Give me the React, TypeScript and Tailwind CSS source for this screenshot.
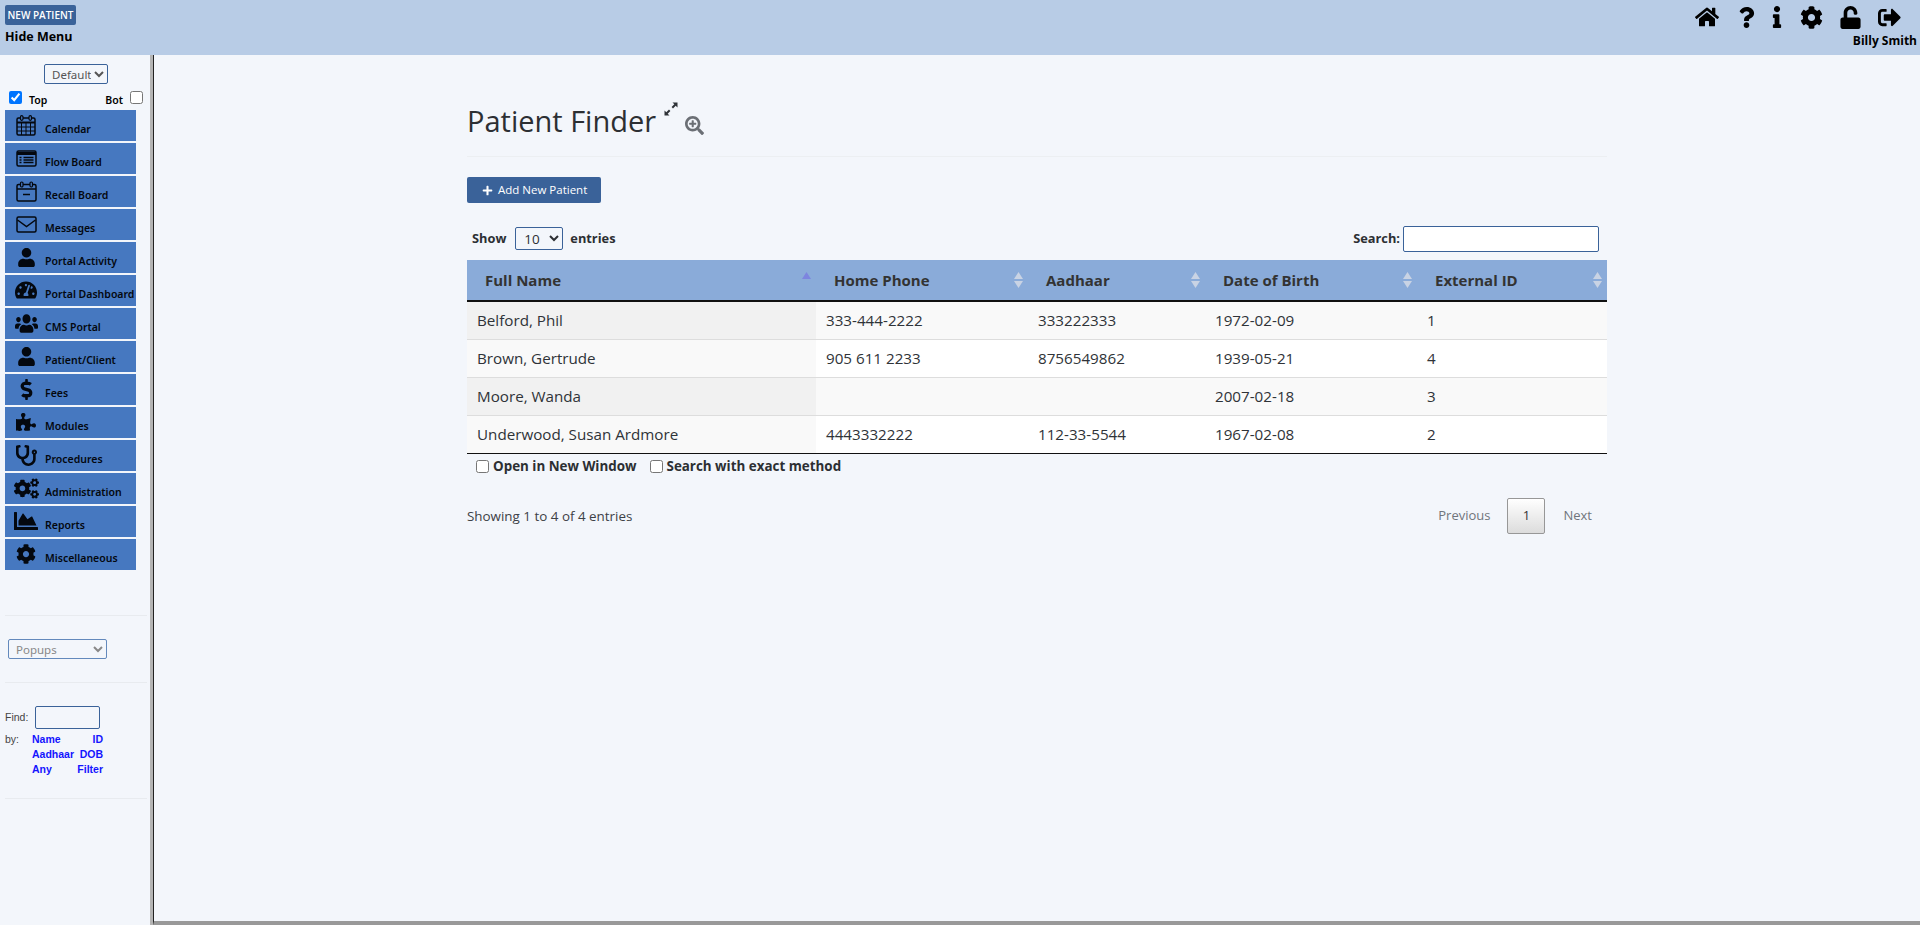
import {
  FaChartArea,
  FaCog,
  FaCogs,
  FaDollarSign,
  FaHome,
  FaInfo,
  FaPlus,
  FaPuzzlePiece,
  FaQuestion,
  FaSearchPlus,
  FaSignOutAlt,
  FaStethoscope,
  FaTachometerAlt,
  FaUnlock,
  FaUser,
  FaUsers,
} from "react-icons/fa";
import type { ReactNode } from "react";

function CalendarIcon() {
  return (
    <svg width="20" height="21" viewBox="0 0 20 21" fill="none" stroke="currentColor">
      <rect x="1" y="3" width="18" height="17" rx="1.5" strokeWidth="1.5" />
      <path d="M1 7.5h18" strokeWidth="2" />
      <path d="M5.5 8v12M10 8v12M14.5 8v12M1 12h18M1 16h18" strokeWidth="1" />
      <rect x="4.5" y="0.7" width="2.5" height="4.6" rx="1.2" fill="#4678c0" strokeWidth="1.2" />
      <rect x="13" y="0.7" width="2.5" height="4.6" rx="1.2" fill="#4678c0" strokeWidth="1.2" />
    </svg>
  );
}

function FlowIcon() {
  return (
    <svg width="21" height="17" viewBox="0 0 21 17" fill="none" stroke="currentColor">
      <rect x="1" y="1" width="19" height="15" rx="1.5" strokeWidth="1.5" />
      <path d="M1 3.5h19" strokeWidth="3" />
      <path d="M3.5 7.5h2M7.5 7.5h10M3.5 10h2M7.5 10h10M3.5 12.5h2M7.5 12.5h10" strokeWidth="1.3" />
    </svg>
  );
}

function RecallIcon() {
  return (
    <svg width="21" height="21" viewBox="0 0 21 21" fill="none" stroke="currentColor">
      <rect x="1" y="3.5" width="19" height="16.5" rx="1.5" strokeWidth="1.5" />
      <path d="M1 8h19" strokeWidth="1.5" />
      <path d="M7 13.5h7" strokeWidth="1.5" />
      <rect x="4.5" y="1" width="2.5" height="5" rx="1.2" fill="#4678c0" strokeWidth="1.2" />
      <rect x="14" y="1" width="2.5" height="5" rx="1.2" fill="#4678c0" strokeWidth="1.2" />
    </svg>
  );
}

function MailIcon() {
  return (
    <svg width="21" height="17" viewBox="0 0 21 17" fill="none" stroke="currentColor" strokeWidth="1.5">
      <rect x="1" y="1" width="19" height="15" rx="1.5" />
      <path d="M1.5 4l9 6.5 9-6.5" />
    </svg>
  );
}

function ExpandIcon() {
  return (
    <svg width="14" height="14" viewBox="0 0 14 14" fill="currentColor" className="mt-[2px] ml-[8px] shrink-0">
      <path d="M8.5 0.5H13.5V5.5L11.7 3.7 9 6.4 7.6 5 10.3 2.3Z" />
      <path d="M0.5 8.5V13.5H5.5L3.7 11.7 6.4 9 5 7.6 2.3 10.3Z" />
    </svg>
  );
}

function SortArrows({ active }: { active?: boolean }) {
  if (active) {
    return (
      <svg width="9" height="7" viewBox="0 0 9 7" className="mb-[10px] shrink-0 fill-[#7d85df]">
        <path d="M4.5 0L9 7H0Z" />
      </svg>
    );
  }
  return (
    <svg width="9" height="16" viewBox="0 0 9 16" className="shrink-0 fill-[#c9d3e4]">
      <path d="M4.5 0L9 7H0Z" />
      <path d="M4.5 16L0 9H9Z" />
    </svg>
  );
}

const menu: { label: string; icon: ReactNode }[] = [
  { label: "Calendar", icon: <CalendarIcon /> },
  { label: "Flow Board", icon: <FlowIcon /> },
  { label: "Recall Board", icon: <RecallIcon /> },
  { label: "Messages", icon: <MailIcon /> },
  { label: "Portal Activity", icon: <FaUser size={19} /> },
  { label: "Portal Dashboard", icon: <FaTachometerAlt size={22} /> },
  { label: "CMS Portal", icon: <FaUsers preserveAspectRatio="none" className="h-[21px] w-[23px]" /> },
  { label: "Patient/Client", icon: <FaUser size={19} /> },
  { label: "Fees", icon: <FaDollarSign size={21} /> },
  { label: "Modules", icon: <FaPuzzlePiece size={20} /> },
  { label: "Procedures", icon: <FaStethoscope size={21} /> },
  { label: "Administration", icon: <FaCogs size={25} /> },
  { label: "Reports", icon: <FaChartArea size={24} /> },
  { label: "Miscellaneous", icon: <FaCog size={20} /> },
];

const rows = [
  ["Belford, Phil", "333-444-2222", "333222333", "1972-02-09", "1"],
  ["Brown, Gertrude", "905 611 2233", "8756549862", "1939-05-21", "4"],
  ["Moore, Wanda", "", "", "2007-02-18", "3"],
  ["Underwood, Susan Ardmore", "4443332222", "112-33-5544", "1967-02-08", "2"],
];

const heads = ["Full Name", "Home Phone", "Aadhaar", "Date of Birth", "External ID"];
const widths = ["w-[349px]", "w-[212px]", "w-[177px]", "w-[212px]", "w-[190px]"];

export default function App() {
  return (
    <div className="flex h-[925px] flex-col overflow-hidden bg-[#f3f6fb] font-['Open_Sans',sans-serif] text-[#2f3338]">
      <header className="flex h-[55px] shrink-0 justify-between bg-[#b8cce6]">
        <div className="pl-[5px] pt-[5px]">
          <button className="block h-[20px] w-[71px] rounded-[2px] bg-[#3a6299] text-[10px] leading-[20px] font-semibold text-white">
            NEW PATIENT
          </button>
          <div className="mt-[3px] text-[12.5px] leading-[17px] font-bold text-black">Hide Menu</div>
        </div>
        <div className="flex flex-col items-end pr-[3px] pt-[5px] text-black">
          <div className="flex h-[24px] items-center">
            <span className="flex w-[32px] justify-center"><FaHome size={24} /></span>
            <span className="flex w-[46px] justify-center"><FaQuestion size={21} /></span>
            <span className="flex w-[16px] justify-center"><FaInfo size={22} /></span>
            <span className="flex w-[53px] justify-center"><FaCog size={23} /></span>
            <span className="flex w-[24px] justify-center"><FaUnlock size={23} /></span>
            <span className="flex w-[55px] justify-center"><FaSignOutAlt size={23} /></span>
          </div>
          <div className="mt-[4px] text-[12px] leading-[16px] font-bold">Billy Smith</div>
        </div>
      </header>
      <div className="flex min-h-0 flex-1">
        <aside className="flex w-[150px] shrink-0 flex-col font-['Noto_Sans',sans-serif] text-[11px]">
          <div className="flex justify-center pt-[9px] pl-[2px]">
            <select className="h-[20px] w-[64px] rounded-[2px] border border-[#3a6299] bg-transparent pl-[3px] text-[11.5px] text-[#555]">
              <option>Default</option>
            </select>
          </div>
          <div className="mt-[7px] flex h-[19px] w-[143px] items-start pl-[9px] text-[10.5px] font-semibold text-black">
            <input type="checkbox" defaultChecked className="h-[13px] w-[13px]" />
            <span className="mt-[2px] ml-[7px]">Top</span>
            <span className="mt-[2px] mr-[7px] ml-auto">Bot</span>
            <input type="checkbox" className="h-[13px] w-[13px]" />
          </div>
          <nav className="flex flex-col gap-[2px] pl-[5px]">
            {menu.map((item) => (
              <div key={item.label} className="flex h-[31px] w-[131px] bg-[#4678c0] text-[#04080f]">
                <span className="flex w-[40px] shrink-0 items-center justify-center pb-[1px] pl-[2px]">{item.icon}</span>
                <span className="mt-[12px] text-[10.5px] leading-[15px] font-semibold whitespace-nowrap">{item.label}</span>
              </div>
            ))}
          </nav>
          <div className="mt-[45px] ml-[5px] w-[142px] border-t border-[#e8ebef]" />
          <div className="pt-[23px] pl-[8px]">
            <select className="h-[20px] w-[99px] rounded-[2px] border border-[#6389bc] bg-transparent pl-[3px] text-[11.5px] text-[#888]">
              <option>Popups</option>
            </select>
          </div>
          <div className="mt-[23px] ml-[5px] w-[142px] border-t border-[#e8ebef]" />
          <div className="font-['Liberation_Sans',sans-serif] text-[10.5px]">
            <div className="flex items-center pt-[23px] pl-[5px]">
              <span className="w-[30px] text-[#444]">Find:</span>
              <input className="h-[23px] w-[65px] rounded-[2px] border border-[#3a6299] bg-transparent" />
            </div>
            <div className="mt-[3px] flex pl-[5px] leading-[15px]">
              <span className="w-[27px] text-[#444]">by:</span>
              <div className="grid w-[71px] grid-cols-[auto_auto] justify-between font-bold text-[#1414ff]">
                <span>Name</span>
                <span className="text-right">ID</span>
                <span>Aadhaar</span>
                <span className="text-right">DOB</span>
                <span>Any</span>
                <span className="text-right">Filter</span>
              </div>
            </div>
          </div>
          <div className="mt-[21px] ml-[5px] w-[142px] border-t border-[#e8ebef]" />
        </aside>
        <div className="w-[3px] shrink-0 bg-[#b4b4b4]" />
        <main className="min-w-0 flex-1 border-b-[4px] border-l border-[#222] [border-bottom-color:#999] pl-[313px]">
          <div className="w-[1140px]">
            <div className="flex h-[102px] items-start border-b border-[#eceff2] pt-[45px]">
              <h1 className="mt-[1px] shrink-0 text-[29px] leading-[40px] font-normal text-[#2c2f33]">Patient Finder</h1>
              <ExpandIcon />
              <FaSearchPlus size={19} className="mt-[16px] ml-[7px] shrink-0 text-[#6b6f75]" />
            </div>
            <button className="mt-[20px] flex h-[26px] w-[134px] items-center rounded-[2px] bg-[#3a6299] pl-[15px] text-[11.5px] text-white">
              <FaPlus size={11} className="mr-[5px]" />
              Add New Patient
            </button>
            <div className="mt-[23px] flex h-[25px] items-center justify-between pr-[8px] pl-[5px] text-[12.8px] font-bold text-[#2c2f33]">
              <div className="flex items-center">
                Show
                <select className="mr-[7px] ml-[9px] h-[23px] w-[48px] rounded-[2px] border border-[#3a6299] bg-transparent pl-[4px] text-[13.5px] font-normal">
                  <option>10</option>
                </select>
                entries
              </div>
              <div className="flex items-center">
                Search:
                <input className="ml-[3px] h-[26px] w-[196px] rounded-[2px] border border-[#3a6299] bg-white" />
              </div>
            </div>
            <table className="mt-[9px] w-[1140px] table-fixed border-collapse text-[15.2px]">
              <thead>
                <tr className="h-[41px] border-b-[2px] border-[#111] bg-[#8aabd9] text-left">
                  {heads.map((h, i) => (
                    <th key={h} className={`${widths[i]} p-0`}>
                      <div className="flex items-center justify-between pr-[5px] pl-[18px] text-[15px] font-bold text-[#333]">
                        {h}
                        <SortArrows active={i === 0} />
                      </div>
                    </th>
                  ))}
                </tr>
              </thead>
              <tbody>
                {rows.map((r, ri) => (
                  <tr key={r[0]} className="h-[38px] border-t border-[#ddd] first:border-t-0">
                    {r.map((c, ci) => (
                      <td
                        key={ci}
                        className={
                          ci === 0
                            ? ri % 2 === 0
                              ? "bg-[#f1f1f1] px-[10px] pt-[1px]"
                              : "bg-[#f9f9f9] px-[10px] pt-[1px]"
                            : ri % 2 === 0
                              ? "bg-[#f9f9f9] px-[10px] pt-[1px]"
                              : "bg-white px-[10px] pt-[1px]"
                        }
                      >
                        {c}
                      </td>
                    ))}
                  </tr>
                ))}
              </tbody>
            </table>
            <div className="flex h-[26px] items-center border-t border-[#111] pl-[9px] text-[13.4px] font-bold text-[#2c2f33]">
              <label className="flex items-center">
                <input type="checkbox" className="mr-[4px] h-[13px] w-[13px]" />
                Open in New Window
              </label>
              <label className="ml-[13px] flex items-center">
                <input type="checkbox" className="mr-[4px] h-[13px] w-[13px]" />
                Search with exact method
              </label>
            </div>
            <div className="mt-[19px] flex h-[36px] items-center justify-between">
              <span className="text-[13.4px] text-[#3d4146]">Showing 1 to 4 of 4 entries</span>
              <div className="flex items-center pr-[15px] text-[13px] text-[#70757b]">
                <span className="mr-[17px]">Previous</span>
                <span className="flex h-[36px] w-[38px] items-center justify-center rounded-[2px] border border-[#979797] bg-linear-to-b from-white to-[#dcdcdc] text-[#333]">
                  1
                </span>
                <span className="ml-[18px]">Next</span>
              </div>
            </div>
          </div>
        </main>
      </div>
    </div>
  );
}
